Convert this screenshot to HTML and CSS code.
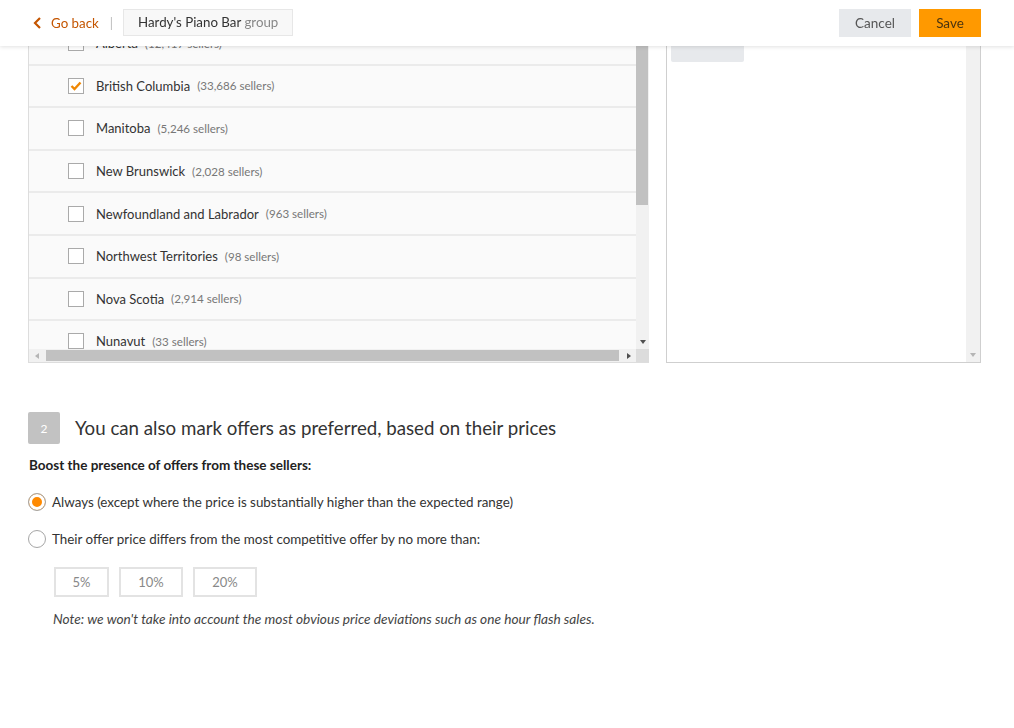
FILE: index.html
```html
<!DOCTYPE html>
<html lang="en">
<head>
    <meta charset="UTF-8">
    <meta name="viewport" content="width=device-width, initial-scale=1.0">
    <title>Hardy's Piano Bar group</title>
    <link rel="stylesheet" href="styles.css">
</head>
<body>
    <header class="topbar">
        <div class="topbar-left">
            <a class="back-link" href="#">
                <svg width="9" height="12" viewBox="0 0 9 12"><polyline points="7,1 2,6 7,11" fill="none" stroke="#c45500" stroke-width="2.2"/></svg>
                Go back
            </a>
            <span class="divider">|</span>
            <div class="group-name">Hardy's Piano Bar <span>group</span></div>
        </div>
        <div class="topbar-right">
            <button class="btn btn-cancel">Cancel</button>
            <button class="btn btn-save">Save</button>
        </div>
    </header>

    <main class="content">
        <div class="panels">
            <div class="list-panel">
                <div class="list-view">
                    <div class="row"><span class="box"></span><span class="name">Alberta</span><span class="count">(12,417 sellers)</span></div>
                    <div class="row"><span class="box checked"><svg width="12" height="10" viewBox="0 0 12 10"><polyline points="1.5,5 4.5,8 10.5,1.5" fill="none" stroke="#f08804" stroke-width="2.4"/></svg></span><span class="name">British Columbia</span><span class="count">(33,686 sellers)</span></div>
                    <div class="row"><span class="box"></span><span class="name">Manitoba</span><span class="count">(5,246 sellers)</span></div>
                    <div class="row"><span class="box"></span><span class="name">New Brunswick</span><span class="count">(2,028 sellers)</span></div>
                    <div class="row"><span class="box"></span><span class="name">Newfoundland and Labrador</span><span class="count">(963 sellers)</span></div>
                    <div class="row"><span class="box"></span><span class="name">Northwest Territories</span><span class="count">(98 sellers)</span></div>
                    <div class="row"><span class="box"></span><span class="name">Nova Scotia</span><span class="count">(2,914 sellers)</span></div>
                    <div class="row"><span class="box"></span><span class="name">Nunavut</span><span class="count">(33 sellers)</span></div>
                </div>
                <div class="vbar">
                    <div class="vthumb"></div>
                    <div class="sb-btn"><span class="arrow down"></span></div>
                </div>
                <div class="hbar">
                    <div class="sb-btn"><span class="arrow left off"></span></div>
                    <div class="hthumb"></div>
                    <div class="sb-btn"><span class="arrow right"></span></div>
                </div>
                <div class="corner"></div>
            </div>

            <div class="picked-panel">
                <div class="picked-view">
                    <div class="chip"></div>
                </div>
                <div class="vbar light">
                    <div class="sb-btn"><span class="arrow down off"></span></div>
                </div>
            </div>
        </div>

        <section class="step">
            <div class="step-head">
                <span class="step-num">2</span>
                <h2>You can also mark offers as preferred, based on their prices</h2>
            </div>
            <p class="boost">Boost the presence of offers from these sellers:</p>
            <label class="radio-row"><span class="radio on"></span>Always (except where the price is substantially higher than the expected range)</label>
            <label class="radio-row"><span class="radio"></span>Their offer price differs from the most competitive offer by no more than:</label>
            <div class="pcts">
                <button class="pct">5%</button>
                <button class="pct">10%</button>
                <button class="pct">20%</button>
            </div>
            <p class="note">Note: we won't take into account the most obvious price deviations such as one hour flash sales.</p>
        </section>
    </main>
</body>
</html>
```

FILE: styles.css
```css
body {
    margin: 0;
    font-family: Lato, "Open Sans", Arial, sans-serif;
    color: #333;
    background: #fff;
}
.topbar {
    position: fixed;
    top: 0;
    left: 0;
    right: 0;
    height: 46px;
    background: #fff;
    box-shadow: 0 1px 4px rgba(0,0,0,0.12);
    display: flex;
    justify-content: space-between;
    align-items: center;
    padding: 0 33px;
    z-index: 10;
}
.topbar-left {
    display: flex;
    align-items: center;
}
.back-link {
    display: flex;
    align-items: center;
    gap: 9px;
    color: #c45500;
    text-decoration: none;
    font-size: 13.3px;
    margin-top: -1px;
}
.divider {
    color: #bbb;
    margin: 0 10px 0 11px;
    font-size: 13px;
}
.group-name {
    background: #f8f8f8;
    border: 1px solid #e7e7e7;
    height: 25px;
    line-height: 25px;
    padding: 0 14px;
    font-size: 13.3px;
    color: #333;
    margin-top: -1px;
}
.group-name span {
    color: #888;
}
.topbar-right {
    display: flex;
    gap: 8px;
}
.btn {
    font-family: inherit;
    font-size: 13.5px;
    height: 28px;
    border: none;
    padding: 0;
}
.btn-cancel {
    width: 72px;
    background: #e7e9ec;
    color: #555;
}
.btn-save {
    width: 62px;
    background: #ff9900;
    color: #4a3410;
}
.content {
    padding: 23px 33px 40px 28px;
}
.panels {
    display: flex;
    gap: 17px;
}
.list-panel {
    width: 620px;
    height: 339px;
    border-left: 1px solid #ddd;
    border-bottom: 1px solid #ddd;
    display: grid;
    grid-template-columns: 1fr 13px;
    grid-template-rows: 1fr 13px;
}
.list-view {
    overflow: hidden;
    background: #fafafa;
}
.row {
    height: 40.6px;
    border-bottom: 2px solid #ebebeb;
    display: flex;
    align-items: center;
    padding-left: 39px;
    font-size: 13px;
}
.box {
    width: 14px;
    height: 14px;
    border: 1px solid #aaa;
    background: #fff;
    margin-right: 12px;
    display: flex;
    align-items: center;
    justify-content: center;
}
.name {
    color: #333;
}
.count {
    color: #777;
    font-size: 11.6px;
    margin-left: 7px;
}
.vbar {
    background: #f1f1f1;
    display: flex;
    flex-direction: column;
    justify-content: space-between;
}
.vthumb {
    width: 12px;
    height: 182px;
    background: #c1c1c1;
}
.sb-btn {
    width: 13px;
    height: 15px;
    display: flex;
    align-items: center;
    justify-content: center;
    flex-shrink: 0;
}
.hbar {
    background: #f1f1f1;
    display: flex;
    align-items: stretch;
}
.hbar .sb-btn {
    width: 15px;
    height: 13px;
}
.hthumb {
    flex: 1;
    margin: 1px 2px;
    background: #c1c1c1;
}
.corner {
    background: #dcdcdc;
}
.arrow {
    width: 0;
    height: 0;
    border: 4px solid transparent;
}
.arrow.down {
    border-top-color: #505050;
    border-bottom: 0;
    border-left-width: 3.5px;
    border-right-width: 3.5px;
}
.arrow.left {
    border-right-color: #505050;
    border-left: 0;
    border-top-width: 3.5px;
    border-bottom-width: 3.5px;
}
.arrow.right {
    border-left-color: #505050;
    border-right: 0;
    border-top-width: 3.5px;
    border-bottom-width: 3.5px;
}
.arrow.down.off {
    border-top-color: #b5b5b5;
}
.arrow.left.off {
    border-right-color: #b5b5b5;
}
.picked-panel {
    width: 313px;
    height: 339px;
    border: 1px solid #cfcfcf;
    border-top: none;
    display: flex;
}
.picked-view {
    flex: 1;
    padding: 4px;
}
.vbar.light {
    width: 14px;
    justify-content: flex-end;
}
.vbar.light .sb-btn {
    width: 14px;
}
.chip {
    width: 73px;
    height: 35px;
    background: #e7e9ec;
    border-radius: 2px;
}
.step {
    margin-top: 49px;
}
.step-head {
    display: flex;
    align-items: center;
    gap: 15px;
}
.step-num {
    width: 32px;
    height: 32px;
    background: #c2c2c2;
    color: #fff;
    font-size: 12px;
    border-radius: 2px;
    display: flex;
    align-items: center;
    justify-content: center;
}
.step-head h2 {
    margin: 0;
    font-size: 18.7px;
    font-weight: normal;
    color: #333;
}
.boost {
    font-size: 13.5px;
    font-weight: bold;
    margin: 13px 0 0 1px;
    color: #222;
}
.radio-row {
    display: flex;
    align-items: center;
    gap: 6px;
    font-size: 13.4px;
    color: #333;
    margin-top: 20px;
}
.radio-row + .radio-row {
    margin-top: 19px;
}
.radio {
    width: 18px;
    height: 18px;
    border: 1px solid #a6a6a6;
    border-radius: 50%;
    background: #fff;
    box-sizing: border-box;
}
.radio.on {
    background: #ff8a00;
    box-shadow: inset 0 0 0 3px #fff;
}
.pcts {
    display: flex;
    gap: 10px;
    margin: 19px 0 0 26px;
}
.pct {
    font-family: inherit;
    font-size: 13px;
    color: #888;
    background: #fff;
    border: 2px solid #e3e3e3;
    height: 30px;
    padding: 0;
    width: 55px;
}
.pct + .pct {
    width: 64px;
}
.note {
    font-size: 13.7px;
    font-style: italic;
    color: #444;
    margin: 13px 0 0 25px;
}
```
